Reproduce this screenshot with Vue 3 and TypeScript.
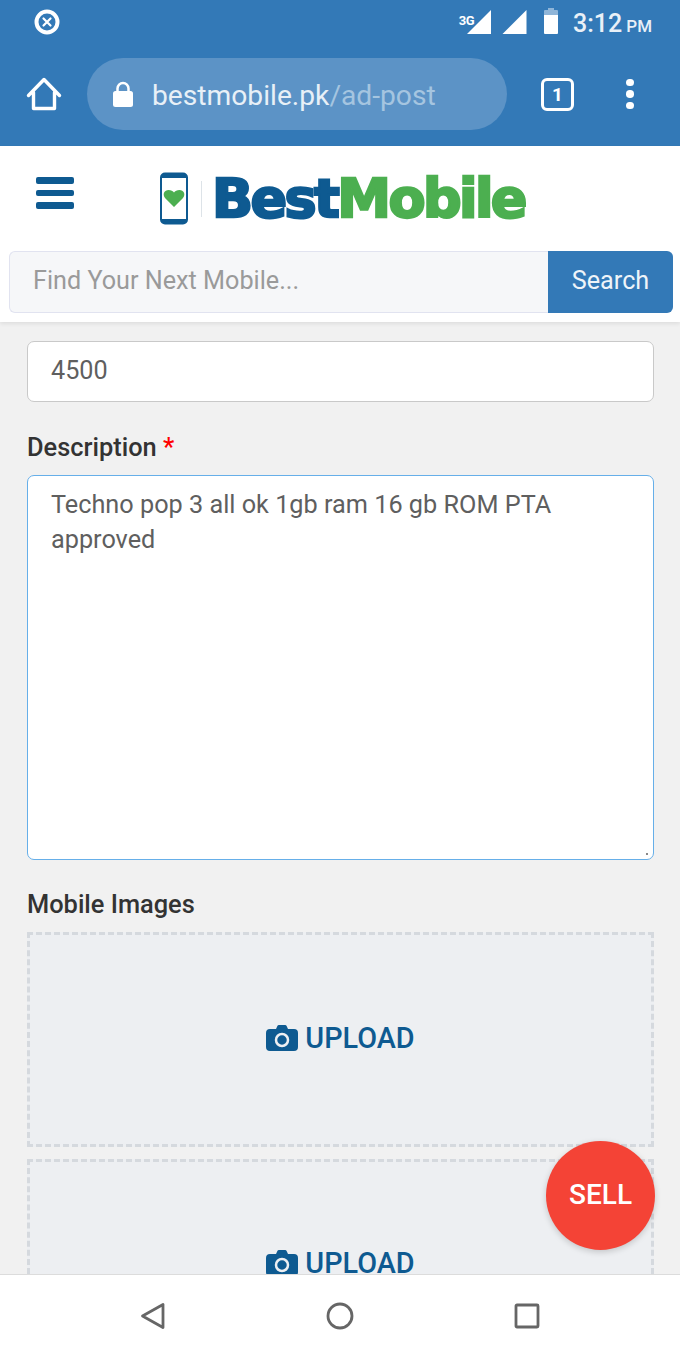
<script setup lang="ts">
const description = 'Techno pop 3 all ok 1gb ram 16 gb ROM PTA approved'
const uploads = [1, 2]
</script>

<template>
  <div class="phone">
    <!-- android + browser chrome -->
    <div class="chrome">
      <div class="status">
        <svg class="notif" width="26" height="26" viewBox="0 0 26 26">
          <circle cx="13" cy="13" r="10.5" fill="none" stroke="#fff" stroke-width="4" />
          <path d="M9.5 9.5l7 7M16.500 9.5l-7 7" stroke="#fff" stroke-width="2.2" stroke-linecap="round" />
        </svg>
        <div class="status-right">
          <span class="net">3G</span>
          <svg width="25" height="24" viewBox="0 0 25 24" class="sig-a"><path d="M24 0v24H0z" fill="#fff" /></svg>
          <svg width="26" height="24" viewBox="0 0 25 24" class="sig-b"><path d="M24 0v24H0z" fill="#fff" /></svg>
          <svg width="16" height="26" viewBox="0 0 16 26" class="batt">
            <path d="M5 0h6v2h3a1 1 0 0 1 1 1v4H1V3a1 1 0 0 1 1-1h3z" fill="#8fb5d8" />
            <path d="M1 7h14v18a1 1 0 0 1-1 1H2a1 1 0 0 1-1-1z" fill="#fff" />
          </svg>
          <span class="time">3:12</span><span class="ampm">PM</span>
        </div>
      </div>
      <div class="toolbar">
        <svg class="home" width="36" height="36" viewBox="0 0 36 36">
          <path d="M2.500 19.500 18 3.500l15.500 16M7.500 16.500V32.500h21V16.500" fill="none" stroke="#fff" stroke-width="3.400" stroke-linejoin="round" stroke-linecap="round" />
        </svg>
        <div class="omnibox">
          <svg width="22" height="27" viewBox="0 0 22 27">
            <path d="M5.500 12V7.500a5.500 5.500 0 0 1 11 0V12" fill="none" stroke="#fff" stroke-width="2.500" />
            <rect x="1" y="10" width="20" height="16" rx="2.500" fill="#fff" />
          </svg>
          <span class="url">bestmobile.pk<span class="url-path">/ad-post</span></span>
        </div>
        <div class="tabs">1</div>
        <div class="dots"><i></i><i></i><i></i></div>
      </div>
    </div>

    <!-- site header -->
    <header class="site-head">
      <div class="brand-row">
        <div class="burger"><i></i><i></i><i></i></div>
        <svg class="logo-mark" width="30" height="53" viewBox="0 0 30 53">
          <rect x="2" y="1.500" width="26" height="50" rx="4" fill="#fff" stroke="#0e5a91" stroke-width="2" />
          <path d="M3 2h24v4H3zM3 47h24v4H3z" fill="#0e5a91" />
          <path d="M15 35 6 26c-3-4-.5-8 3.500-8 2.500 0 4.500 1 5.500 2.500C16 19 18 18 20.500 18c4 0 6.500 4 3.500 8z" fill="#4caf50" />
        </svg>
        <span class="logo-sep"></span>
        <span class="logo-text"><span class="best">Best</span><span class="mobile">Mobile</span></span>
      </div>
      <div class="search">
        <div class="search-input">Find Your Next Mobile...</div>
        <div class="search-btn">Search</div>
      </div>
    </header>

    <!-- ad form -->
    <main class="form">
      <div class="field-input">4500</div>
      <label class="label desc-label">Description <span class="req">*</span></label>
      <div class="textarea">
        {{ description }}
        <span class="grip"></span>
      </div>
      <label class="label images-label">Mobile Images</label>
      <div v-for="n in uploads" :key="n" class="upload">
        <svg width="32" height="26" viewBox="0 0 32 26">
          <path d="M4 4h6l1.500-3.200a1.500 1.500 0 0 1 1.300-.8h6.400a1.500 1.500 0 0 1 1.300.8L22 4h6a4 4 0 0 1 4 4v14a4 4 0 0 1-4 4H4a4 4 0 0 1-4-4V8a4 4 0 0 1 4-4z" fill="#0e5a91" />
          <circle cx="16" cy="15" r="6" fill="none" stroke="#edeff2" stroke-width="2.500" />
        </svg>
        <span>UPLOAD</span>
      </div>
    </main>

    <div class="fab">SELL</div>

    <nav class="android-nav">
      <svg width="26" height="28" viewBox="0 0 26 28">
        <path d="M23 2.500v23L2.500 14z" fill="none" stroke="#666" stroke-width="2.800" stroke-linejoin="round" />
      </svg>
      <svg width="28" height="28" viewBox="0 0 28 28">
        <circle cx="14" cy="14" r="12" fill="none" stroke="#666" stroke-width="2.800" />
      </svg>
      <svg width="26" height="26" viewBox="0 0 26 26">
        <rect x="2" y="2" width="22" height="22" rx="1" fill="none" stroke="#666" stroke-width="2.800" />
      </svg>
    </nav>
  </div>
</template>

<style>
html,
body {
  margin: 0;
  overflow: hidden;
}
</style>

<style scoped>
.phone {
  position: relative;
  width: 680px;
  height: 1360px;
  display: flex;
  flex-direction: column;
  overflow: hidden;
  background: #f1f1f1;
  font-family: Roboto, "Liberation Sans", sans-serif;
}

.chrome {
  height: 146px;
  flex: none;
  background: #3379b7;
  color: #fff;
}

.status {
  height: 44px;
  display: flex;
  align-items: center;
  justify-content: space-between;
  padding: 0 28px 0 34px;
}

.status-right {
  display: flex;
  align-items: center;
}

.net {
  font-size: 13px;
  font-weight: 700;
  letter-spacing: -0.500px;
  align-self: flex-start;
  margin: 7px -7px 0 0;
}

.sig-a,
.sig-b {
  margin-top: -1px;
}

.sig-b {
  margin-left: 10px;
}

.batt {
  margin-left: 15px;
  margin-top: -2px;
}

.time {
  margin-left: 14px;
  margin-top: 3px;
  font-size: 25px;
  font-weight: 500;
  color: #e9f0f7;
}

.ampm {
  margin-left: 4px;
  margin-top: 7px;
  font-size: 17px;
  font-weight: 500;
  color: #e9f0f7;
}

.toolbar {
  display: flex;
  align-items: center;
  height: 72px;
  margin-top: 14px;
  padding-left: 26px;
}

.omnibox {
  width: 420px;
  height: 72px;
  margin-left: 25px;
  padding-left: 25px;
  box-sizing: border-box;
  display: flex;
  align-items: center;
  gap: 18px;
  border-radius: 36px;
  background: #5c93c6;
}

.url {
  margin-top: 2px;
  font-size: 28.200px;
  color: #e8f0f7;
}

.url-path {
  color: #a5c5e0;
}

.tabs {
  width: 27px;
  height: 27px;
  margin-left: 34px;
  border: 3px solid #fff;
  border-radius: 6px;
  text-align: center;
  font-size: 19px;
  font-weight: 700;
  line-height: 27px;
}

.dots {
  margin-left: 52px;
  display: flex;
  flex-direction: column;
  gap: 4px;
}

.dots i {
  width: 7.500px;
  height: 7.500px;
  border-radius: 50%;
  background: #fff;
}

.site-head {
  height: 176px;
  flex: none;
  box-sizing: border-box;
  background: #fff;
  box-shadow: 0 2px 4px rgba(0, 0, 0, 0.08);
  position: relative;
  z-index: 1;
}

.brand-row {
  height: 105px;
  display: flex;
  align-items: center;
  padding-left: 36px;
}

.burger {
  width: 38px;
  display: flex;
  flex-direction: column;
  gap: 6px;
  margin-top: -11px;
}

.burger i {
  height: 6.500px;
  border-radius: 2px;
  background: #0e5a91;
}

.logo-mark {
  margin-left: 85px;
}

.logo-sep {
  width: 1px;
  height: 36px;
  margin-left: 12px;
  background: #dde3e8;
}

.logo-text {
  margin-left: 10px;
  font-family: "DejaVu Sans", sans-serif;
  font-size: 54px;
  font-weight: 700;
  letter-spacing: -2.600px;
  line-height: 1;
  -webkit-text-stroke: 2.500px currentColor;
}

.best {
  color: #0e5a91;
}

.mobile {
  color: #4caf50;
}

.search {
  display: flex;
  height: 62px;
  margin: 0 7px 0 9px;
}

.search-input {
  flex: 1;
  box-sizing: border-box;
  padding: 0 0 4px 23px;
  display: flex;
  align-items: center;
  border: 1px solid #e1e3f0;
  border-right: none;
  border-radius: 6px 0 0 6px;
  background: #f6f7f9;
  color: #9a9a9a;
  font-size: 25.200px;
}

.search-btn {
  width: 125px;
  padding-bottom: 4px;
  box-sizing: border-box;
  display: flex;
  align-items: center;
  justify-content: center;
  border-radius: 0 6px 6px 0;
  background: #3379b7;
  color: #eef4f9;
  font-size: 25.200px;
}

.form {
  flex: 1;
  min-height: 0;
  overflow: hidden;
  padding: 19px 26px 0 27px;
}

.field-input {
  height: 61px;
  box-sizing: border-box;
  padding: 0 0 3px 23px;
  display: flex;
  align-items: center;
  border: 1px solid #c9c9c9;
  border-radius: 7px;
  background: #fff;
  color: #5f5f5f;
  font-size: 25.200px;
}

.label {
  display: block;
  color: #333;
  font-size: 25.400px;
  font-weight: 500;
  line-height: 30px;
}

.desc-label {
  margin-top: 30px;
}

.req {
  color: #f00;
}

.textarea {
  position: relative;
  height: 385px;
  margin-top: 13px;
  box-sizing: border-box;
  padding: 11px 23px;
  border: 1.500px solid #66afe9;
  border-radius: 7px;
  background: #fff;
  color: #5f5f5f;
  font-size: 25.250px;
  line-height: 35px;
}

.grip {
  position: absolute;
  right: 5px;
  bottom: 4px;
  width: 2px;
  height: 2px;
  background: #888;
}

.images-label {
  margin-top: 29px;
}

.upload {
  height: 215px;
  margin-top: 13px;
  padding-bottom: 4px;
  box-sizing: border-box;
  display: flex;
  align-items: center;
  justify-content: center;
  gap: 7px;
  border: 3px dashed #d5d9de;
  background: #edeff2;
  color: #0e5a91;
  font-size: 28.800px;
  font-weight: 500;
}

.upload + .upload {
  margin-top: 12px;
  padding-bottom: 8px;
}

.fab {
  position: absolute;
  left: 546px;
  top: 1141px;
  width: 109px;
  height: 109px;
  padding-bottom: 2px;
  box-sizing: border-box;
  z-index: 2;
  display: flex;
  align-items: center;
  justify-content: center;
  border-radius: 50%;
  background: #f44336;
  box-shadow: 0 2px 6px rgba(0, 0, 0, 0.18);
  color: #fff;
  font-size: 28px;
  font-weight: 500;
}

.android-nav {
  height: 86px;
  flex: none;
  box-sizing: border-box;
  padding: 0 140px 4px;
  display: flex;
  align-items: center;
  justify-content: space-between;
  border-top: 1px solid #dcdcdc;
  background: #fff;
  position: relative;
  z-index: 1;
}
</style>
